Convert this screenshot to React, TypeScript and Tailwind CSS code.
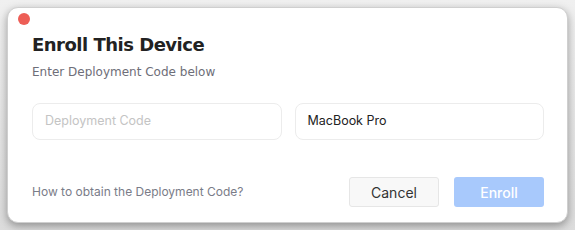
import React from "react";

export default function App() {
  return (
    <div className="w-[575px] h-[230px] overflow-hidden bg-gradient-to-b from-[#f0f0f0] to-[#dcdcdc] pt-[7px] pl-[7px]">
      <div
        className="relative w-[561px] h-[216px] rounded-[11px] bg-white border border-[#cfcfcf] shadow-[0_3px_8px_rgba(0,0,0,0.35)] pl-[24px] pr-[23px] flex flex-col"
      >
        <div className="absolute left-[10px] top-[5px] w-[12px] h-[12px] rounded-full bg-[#ed5e56]" />
        <h1
          className="mt-[26px] text-[18px] leading-[22px] font-bold text-[#222] tracking-[-0.5px]"
          style={{ fontFamily: '"DejaVu Sans", Verdana, sans-serif' }}
        >
          Enroll This Device
        </h1>
        <p
          className="mt-[8px] text-[12px] leading-[16px] text-[#6e6e78]"
          style={{ fontFamily: '"DejaVu Sans", Verdana, sans-serif' }}
        >
          Enter Deployment Code below
        </p>
        <div className="mt-[23px] flex gap-[13px]" style={{ fontFamily: 'Inter, "Noto Sans", sans-serif' }}>
          <div className="flex-1 h-[37px] rounded-[8px] border border-[#ececec] flex items-center px-[12px] text-[12.5px] text-[#c4c4c4]">
            Deployment Code
          </div>
          <div className="flex-1 h-[37px] rounded-[8px] border border-[#ececec] flex items-center px-[12px] text-[12.5px] text-[#222]">
            MacBook Pro
          </div>
        </div>
        <div className="mt-[37px] flex items-center" style={{ fontFamily: 'Inter, "Noto Sans", sans-serif' }}>
          <span className="text-[12px] text-[#7a7c88]">How to obtain the Deployment Code?</span>
          <div className="ml-auto flex gap-[15px]">
            <button className="w-[90px] h-[30px] rounded-[3px] bg-[#f8f8f8] border border-[#e6e6e6] text-[14px] text-[#333]">
              Cancel
            </button>
            <button className="w-[90px] h-[30px] rounded-[3px] bg-[#a8c9fc] text-[14px] text-white font-medium">
              Enroll
            </button>
          </div>
        </div>
      </div>
    </div>
  );
}
